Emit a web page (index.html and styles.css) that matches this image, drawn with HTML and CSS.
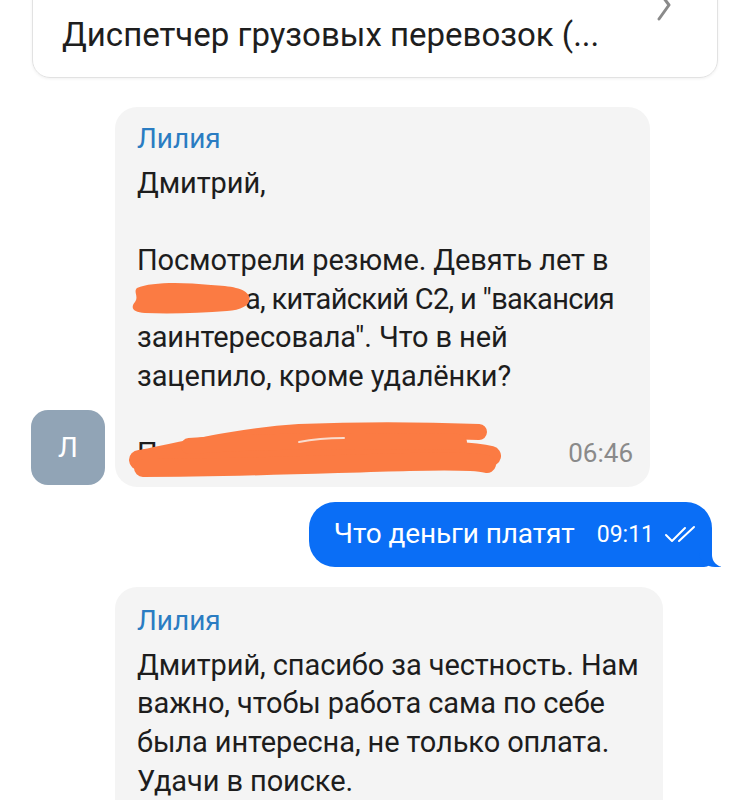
FILE: index.html
```html
<!DOCTYPE html>
<html lang="ru">
<head>
    <meta charset="UTF-8">
    <meta name="viewport" content="width=device-width, initial-scale=1.0">
    <title>Чат</title>
    <link rel="stylesheet" href="styles.css">
</head>
<body>

    <div class="vacancy-card">
        <span class="vacancy-title">Диспетчер грузовых перевозок (...</span>
        <svg class="chevron" width="22" height="40" viewBox="0 0 22 40">
            <path d="M4 4 L16 20 L6 34" fill="none" stroke="#8a8a8a" stroke-width="3" stroke-linecap="round" stroke-linejoin="round"/>
        </svg>
    </div>

    <div class="chat">

        <div class="row incoming">
            <div class="avatar">Л</div>
            <div class="bubble">
                <div class="author">Лилия</div>
                <div class="text">
                    Дмитрий,<br><br>
                    Посмотрели резюме. Девять лет в<br>
                    <span class="hidden-word">Ж</span><span class="tight">а, китайский С2, и "вакансия</span><br>
                    заинтересовала". Что в ней<br>
                    зацепило, кроме удалёнки?<br><br>
                </div>
                <div class="last-line">
                    <span class="text">П</span>
                    <span class="time">06:46</span>
                </div>

                <!-- замазано оранжевым -->
                <svg class="scribble scribble-one" width="124" height="36" viewBox="0 0 124 36">
                    <path d="M6 8 C20 2 50 2 80 5 C100 6 114 8 118 16 C121 24 112 30 96 31 C70 33 40 34 14 33 C2 32 -1 28 4 22 C8 16 2 12 6 8 Z" fill="#fb7b43"/>
                </svg>
                <svg class="scribble scribble-two" width="372" height="62" viewBox="0 0 372 62">
                    <path d="M12 38 C60 28 110 16 170 12 C240 9 300 10 350 12" fill="none" stroke="#fb7b43" stroke-width="16" stroke-linecap="round"/>
                    <path d="M10 40 C90 36 180 30 260 30 C310 30 345 32 362 36" fill="none" stroke="#fb7b43" stroke-width="20" stroke-linecap="round"/>
                    <path d="M14 48 C110 48 200 44 280 42 C320 41 350 42 358 44" fill="none" stroke="#fb7b43" stroke-width="18" stroke-linecap="round"/>
                    <path d="M60 26 C140 20 230 20 330 22" fill="none" stroke="#fb7b43" stroke-width="16" stroke-linecap="round"/>
                    <path d="M170 22 C185 19 200 18 215 18" fill="none" stroke="#f9dccd" stroke-width="2" stroke-linecap="round"/>
                </svg>
            </div>
        </div>

        <div class="row outgoing">
            <div class="bubble own">
                <span class="text">Что деньги платят</span>
                <span class="time">09:11</span>
                <svg class="ticks" width="38" height="18" viewBox="0 0 38 18">
                    <path d="M2 10 L8 16 L21 3" fill="none" stroke="#fff" stroke-width="2" stroke-linecap="round" stroke-linejoin="round"/>
                    <path d="M15 16 L30 2" fill="none" stroke="#fff" stroke-width="2" stroke-linecap="round"/>
                </svg>
            </div>
        </div>

        <div class="row incoming second-row">
            <div class="avatar-space"></div>
            <div class="bubble second">
                <div class="author">Лилия</div>
                <div class="text">
                    Дмитрий, спасибо за честность. Нам<br>
                    важно, чтобы работа сама по себе<br>
                    была интересна, не только оплата.<br>
                    Удачи в поиске.
                </div>
            </div>
        </div>

    </div>

</body>
</html>
```

FILE: styles.css
```css
body {
    margin: 0;
    padding: 0;
    background: #ffffff;
    font-family: Roboto, "Liberation Sans", sans-serif;
    color: #1d1d1d;
    overflow: hidden;
}

.vacancy-card {
    margin: -40px 22px 0 32px;
    height: 118px;
    box-sizing: border-box;
    border: 1px solid #e2e2e2;
    border-radius: 18px;
    box-shadow: 0 1px 3px rgba(0, 0, 0, 0.06);
    display: flex;
    align-items: center;
    justify-content: space-between;
    padding: 30px 42px 0 29px;
}

.vacancy-title {
    font-size: 33px;
    color: #1e1e1e;
}

.chevron {
    align-self: flex-start;
    margin-top: -6px;
}

.chat {
    display: flex;
    flex-direction: column;
    gap: 15px;
    padding: 29px 0 0 31px;
}

.row {
    display: flex;
    align-items: flex-end;
    gap: 10px;
}

.outgoing {
    justify-content: flex-end;
    padding-right: 28px;
}

.second-row {
    margin-top: 5px;
}

.avatar {
    width: 74px;
    height: 75px;
    margin-bottom: 2px;
    border-radius: 17px;
    background: #91a4b6;
    color: #ffffff;
    font-size: 28px;
    display: flex;
    align-items: center;
    justify-content: center;
}

.avatar-space {
    width: 74px;
}

.bubble {
    position: relative;
    background: #f4f4f4;
    border-radius: 22px;
    padding: 14px 17px 14px 22px;
    width: 535px;
    box-sizing: border-box;
}

.bubble.second {
    width: 548px;
    padding-top: 16px;
    padding-bottom: 40px;
}

.author {
    color: #2a7cc2;
    font-size: 28px;
    line-height: 36px;
    margin-bottom: 7px;
}

.text {
    font-size: 29px;
    line-height: 38.6px;
    letter-spacing: -0.1px;
    white-space: nowrap;
}

.hidden-word {
    display: inline-block;
    width: 108px;
}

.tight {
    letter-spacing: -0.7px;
}

.last-line {
    display: flex;
    justify-content: space-between;
    align-items: center;
}

.time {
    font-size: 26px;
    color: #8a8a8a;
}

.scribble {
    position: absolute;
}

.scribble-one {
    left: 16px;
    top: 173px;
}

.scribble-two {
    left: 14px;
    top: 313px;
}

.bubble.own {
    background: #0a6ef6;
    color: #ffffff;
    width: auto;
    height: 65px;
    border-radius: 26px 26px 8px 26px;
    padding: 0 10px 0 25px;
    display: flex;
    align-items: center;
}

.bubble.own::before {
    content: "";
    position: absolute;
    bottom: 0;
    right: -9px;
    width: 22px;
    height: 24px;
    background: #0a6ef6;
    border-bottom-left-radius: 16px 14px;
}

.bubble.own::after {
    content: "";
    position: absolute;
    bottom: 0;
    right: -14px;
    width: 14px;
    height: 26px;
    background: #ffffff;
    border-bottom-left-radius: 12px;
}

.bubble.own .text {
    font-size: 28px;
    line-height: 30px;
}

.bubble.own .time {
    color: #ffffff;
    margin-left: 22px;
    font-size: 23px;
}

.ticks {
    margin-left: 10px;
}
```
